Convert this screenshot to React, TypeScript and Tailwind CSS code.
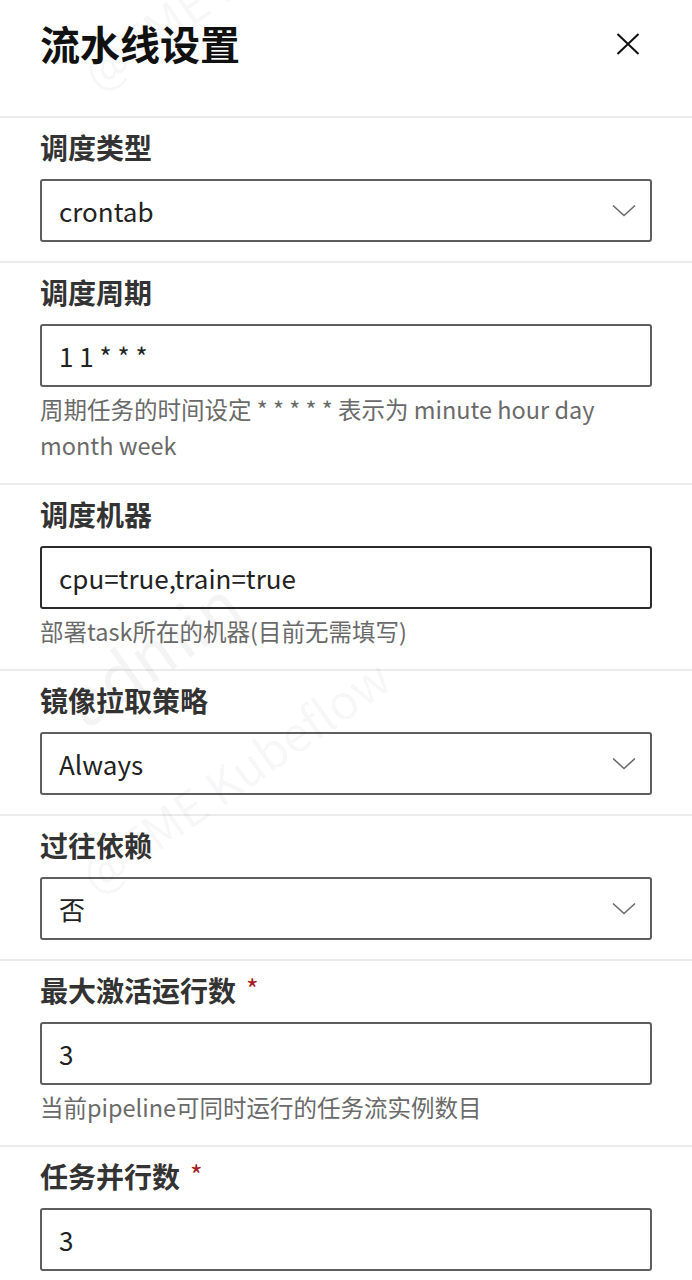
import React from 'react';

type Field = {
  label: string;
  kind: 'select' | 'input';
  value: string;
  help?: React.ReactNode;
  required?: boolean;
  focused?: boolean;
};

const fields: Field[] = [
  { label: '调度类型', kind: 'select', value: 'crontab' },
  {
    label: '调度周期',
    kind: 'input',
    value: '1 1 * * *',
    help: (
      <>
        周期任务的时间设定 * * * * * 表示为 minute hour day
        <br />
        month week
      </>
    ),
  },
  {
    label: '调度机器',
    kind: 'input',
    value: 'cpu=true,train=true',
    help: '部署task所在的机器(目前无需填写)',
    focused: true,
  },
  { label: '镜像拉取策略', kind: 'select', value: 'Always' },
  { label: '过往依赖', kind: 'select', value: '否' },
  {
    label: '最大激活运行数',
    kind: 'input',
    value: '3',
    help: '当前pipeline可同时运行的任务流实例数目',
    required: true,
  },
  { label: '任务并行数', kind: 'input', value: '3', required: true },
];

const Chevron = () => (
  <svg width="24" height="13" viewBox="0 0 24 13" fill="none">
    <path d="M1 1.5 L12 11.5 L23 1.5" stroke="#6b6b6b" strokeWidth="1.6" />
  </svg>
);

const FormSection: React.FC<{ field: Field }> = ({ field }) => (
  <div
    className={`border-t-2 border-[#ebebeb] px-[40px] pt-[10px] ${
      field.help ? 'pb-[20px]' : 'pb-[19px]'
    }`}
  >
    <div className="flex items-start text-[28px] leading-[38px] font-bold text-[#333]">
      <span>{field.label}</span>
      {field.required && (
        <span className="ml-[10px] text-[27px] leading-[36px] font-normal text-[#a61d24]">*</span>
      )}
    </div>
    <div
      className={`mt-[13px] h-[63px] rounded-[3px] border-2 flex items-center justify-between pl-[17px] pr-[14px] ${
        field.focused ? 'border-[#2b2b2b]' : 'border-[#5e5e5e]'
      }`}
    >
      <span className="text-[26px] text-[#222]">{field.value}</span>
      {field.kind === 'select' && <Chevron />}
    </div>
    {field.help && (
      <div className="mt-[4px] text-[23.5px] leading-[36px] text-[#6a6a6a]">{field.help}</div>
    )}
  </div>
);

const Watermark: React.FC<{ x: number; y: number }> = ({ x, y }) => (
  <div className="pointer-events-none absolute select-none" style={{ left: x, top: y }}>
    <div className="absolute left-[-10px] top-[-230px] origin-bottom-left rotate-[-35deg] whitespace-nowrap text-[66px] leading-none text-black/[0.045]">
      admin
    </div>
    <div className="absolute left-0 top-[-48px] origin-bottom-left rotate-[-35deg] whitespace-nowrap text-[48px] leading-none text-black/[0.045]">
      @TME Kubeflow
    </div>
  </div>
);

const App: React.FC = () => {
  return (
    <div className="relative min-h-screen w-full overflow-hidden bg-white font-['Noto_Sans_CJK_SC','Liberation_Sans',sans-serif]">
      {/* Header */}
      <div className="flex h-[116px] items-start justify-between px-[40px] pt-[19px]">
        <h1 className="text-[40px] leading-[48px] font-bold text-[#111]">流水线设置</h1>
        <button className="mt-[14px] mr-[12px]">
          <svg width="24" height="22" viewBox="0 0 24 22" fill="none">
            <path d="M1.5 1 L22.5 21 M22.5 1 L1.5 21" stroke="#111" strokeWidth="2" />
          </svg>
        </button>
      </div>

      {fields.map((f) => (
        <FormSection key={f.label} field={f} />
      ))}

      <Watermark x={98} y={898} />
      <Watermark x={100} y={95} />
    </div>
  );
};

export default App;
